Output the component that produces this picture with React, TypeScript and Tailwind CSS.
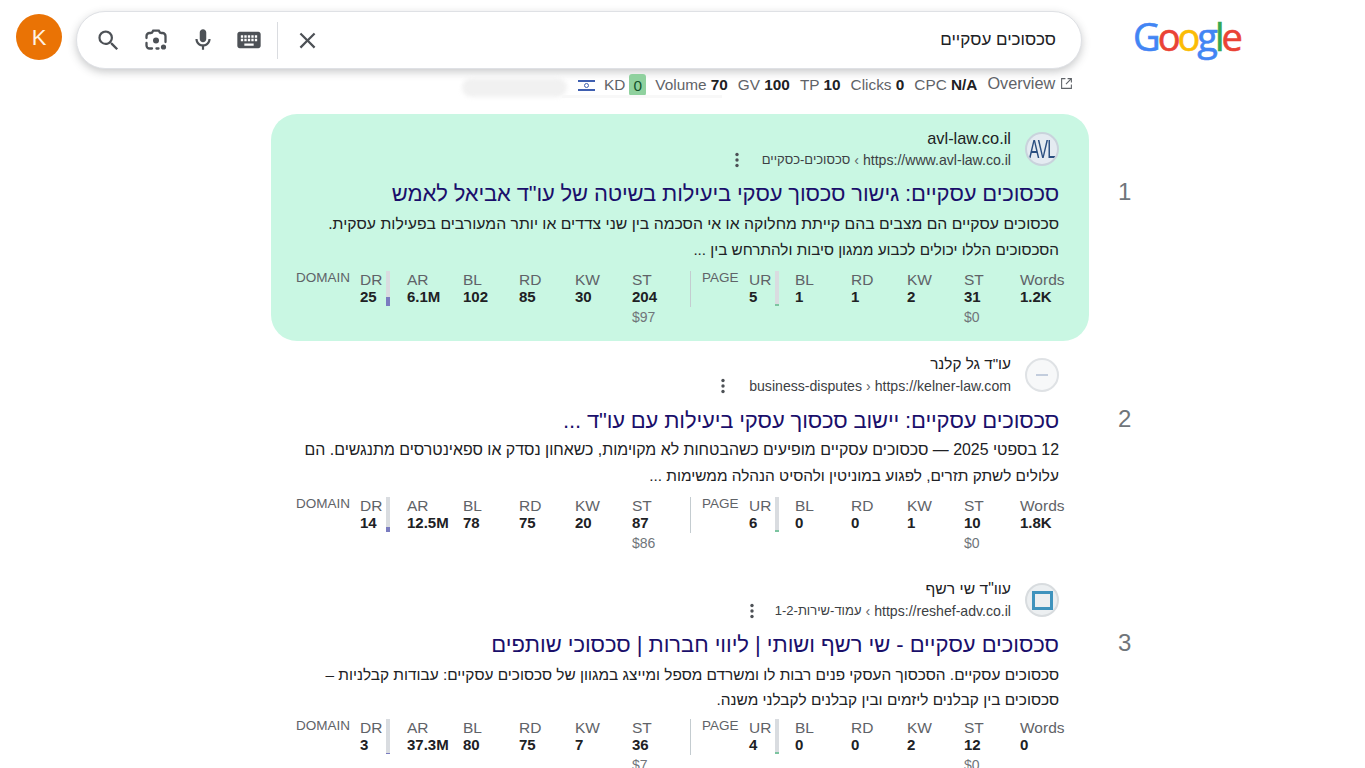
import React from "react";

const F = "[font-family:'Liberation_Sans',Arial,sans-serif]";

type Res = {
  site: string; siteC: string; urlTail: string; tailC: string; dotsC: string; base: string; sep: string;
  title: string; titleC: string; l1: string; l2: string;
  l1c: string; l2c: string; snipC: string; metC: string;
  fav: React.ReactNode; rank: string; h: string; topC: string; green?: boolean; barH: string;
  d: string[]; p: string[]; st$: string; pst$: string;
};

const Avl = (
  <div className="flex h-[34px] w-[34px] items-center justify-center overflow-hidden rounded-full border-2 border-[#c9d3dc] bg-[#e4ebf1]">
    <span className="scale-x-[0.62] text-[25px] leading-none tracking-[-1px] text-[#2a4f80] [font-family:'Liberation_Sans',sans-serif]">AVL</span>
  </div>
);
const Kel = (
  <div className="flex h-[34px] w-[34px] items-center justify-center rounded-full border-2 border-[#dfe2e5] bg-[#f7f8f9]">
    <div className="h-[2px] w-[12px] bg-[#c3cddd]" />
  </div>
);
const Res3 = (
  <div className="flex h-[34px] w-[34px] items-center justify-center rounded-full border-2 border-[#d8dcdf] bg-[#eceff1]">
    <div className="h-[19px] w-[21px] border-[3px] border-[#3f93bd]" />
  </div>
);

const results: Res[] = [
  {
    site: "avl-law.co.il", siteC: "text-[16.4px]", base: "https://www.avl-law.co.il", sep: "‹", urlTail: "סכסוכים-כסקיים", tailC: "text-[13px]", dotsC: "mr-[23px]",
    title: "סכסוכים עסקיים: גישור סכסוך עסקי ביעילות בשיטה של עו\"ד אביאל לאמש", titleC: "mt-[6px] tracking-[-0.14px]",
    l1: "סכסוכים עסקיים הם מצבים בהם קייתת מחלוקה או אי הסכמה בין שני צדדים או יותר המעורבים בפעילות עסקית.",
    l2: "הסכסוכים הללו יכולים לכבוע ממגון סיבות ולהתרחש בין ...",
    l1c: "text-[15.75px] leading-[26px]", l2c: "text-[15.25px] leading-[26px]", snipC: "", metC: "",
    fav: Avl, rank: "1", h: "h-[227px]", topC: "pt-[13px]", green: true, barH: "h-[9px]",
    d: ["25", "6.1M", "102", "85", "30", "204"], p: ["5", "1", "1", "2", "31", "1.2K"], st$: "$97", pst$: "$0",
  },
  {
    site: "עו\"ד גל קלנר", siteC: "text-[15.3px]", base: "https://kelner-law.com", sep: "›", urlTail: "business-disputes", tailC: "", dotsC: "mr-[24px]",
    title: "סכסוכים עסקיים: יישוב סכסוך עסקי ביעילות עם עו\"ד ...", titleC: "mt-[7px] tracking-[-0.14px]",
    l1: "12 בספטי 2025 — סכסוכים עסקיים מופיעים כשהבטחות לא מקוימות, כשאחון נסדק או ספאינטרסים מתנגשים. הם",
    l2: "עלולים לשתק תזרים, לפגוע במוניטין ולהסיט הנהלה ממשימות ...",
    l1c: "text-[15.9px] leading-[26px]", l2c: "text-[15.4px] leading-[26px]", snipC: "-mt-[1px]", metC: "",
    fav: Kel, rank: "2", h: "h-[224px]", topC: "pt-[12px]", barH: "h-[5px]",
    d: ["14", "12.5M", "78", "75", "20", "87"], p: ["6", "0", "0", "1", "10", "1.8K"], st$: "$86", pst$: "$0",
  },
  {
    site: "עוו\"ד שי רשף", siteC: "text-[15.7px]", base: "https://reshef-adv.co.il", sep: "‹", urlTail: "עמוד-שירות-1-2", tailC: "text-[13px]", dotsC: "mr-[21px]",
    title: "סכסוכים עסקיים - שי רשף ושותי | ליווי חברות | סכסוכי שותפים", titleC: "mt-[6px] tracking-[-0.04px]",
    l1: "סכסוכים עסקיים. הסכסוך העסקי פנים רבות לו ומשרדם מספל ומייצג במגוון של סכסוכים עסקיים: עבודות קבלניות –",
    l2: "סכסוכים בין קבלנים ליזמים ובין קבלנים לקבלני משנה.",
    l1c: "text-[15.4px] leading-[25px]", l2c: "text-[15.4px] leading-[25px]", snipC: "", metC: "-mt-[1px]",
    fav: Res3, rank: "3", h: "h-[225px]", topC: "pt-[13px]", barH: "h-[1px]",
    d: ["3", "37.3M", "80", "75", "7", "36"], p: ["4", "0", "0", "2", "12", "0"], st$: "$7", pst$: "$0",
  },
];

const Dots = () => (
  <svg width="4" height="16" viewBox="0 0 4 16" className="shrink-0" fill="#4d5156">
    <circle cx="2" cy="2.5" r="1.7" /><circle cx="2" cy="8" r="1.7" /><circle cx="2" cy="13.5" r="1.7" />
  </svg>
);

const Cell = ({ label, value, sub, w, bar, barH, barColor }: { label: string; value: string; sub?: string; w: string; bar?: boolean; barH?: string; barColor?: string }) => (
  <div className={`relative shrink-0 ${w}`}>
    <div className="h-[18px] text-[15.5px] leading-[17px] text-[#5f6368]">{label}</div>
    <div className="h-[15px] text-[15px] font-bold leading-[15px] text-[#202124]">{value}</div>
    {sub && <div className="mt-[5px] text-[14px] leading-[16px] text-[#70757a]">{sub}</div>}
    {bar && (
      <div className="absolute left-[26px] top-0 flex h-[35px] w-[4px] flex-col justify-end bg-[#d9dce0]">
        <div className={`${barH} ${barColor}`} />
      </div>
    )}
  </div>
);

const Metrics = ({ r }: { r: Res }) => (
  <div className={`flex items-start pl-[25px] pt-[8px] ${r.metC}`} dir="ltr">
    <div className="mt-[-2px] w-[64px] shrink-0 text-[13.5px] leading-[17px] text-[#5f6368]">DOMAIN</div>
    <Cell label="DR" value={r.d[0]} w="w-[47px]" bar barH={r.barH} barColor="bg-[#7a7cc0]" />
    <Cell label="AR" value={r.d[1]} w="w-[56px]" />
    <Cell label="BL" value={r.d[2]} w="w-[56px]" />
    <Cell label="RD" value={r.d[3]} w="w-[56px]" />
    <Cell label="KW" value={r.d[4]} w="w-[57px]" />
    <Cell label="ST" value={r.d[5]} sub={r.st$} w="w-[58px]" />
    <div className="h-[36px] w-[12px] shrink-0 border-l border-[#c4ccd0]" />
    <div className="mt-[-2px] w-[47px] shrink-0 text-[13.5px] leading-[17px] text-[#5f6368]">PAGE</div>
    <Cell label="UR" value={r.p[0]} w="w-[46px]" bar barH="h-[2px]" barColor="bg-[#7cc4a0]" />
    <Cell label="BL" value={r.p[1]} w="w-[56px]" />
    <Cell label="RD" value={r.p[2]} w="w-[56px]" />
    <Cell label="KW" value={r.p[3]} w="w-[57px]" />
    <Cell label="ST" value={r.p[4]} sub={r.pst$} w="w-[56px]" />
    <Cell label="Words" value={r.p[5]} w="w-[50px]" />
  </div>
);

const Result = ({ r }: { r: Res }) => (
  <div className="flex">
    <div className={`${r.h} w-[818px] shrink-0 ${r.topC} ${r.green ? "rounded-[26px] bg-[#c9f7e3]" : ""}`}>
      <div className="flex justify-end pr-[30px]">
        <div className="flex flex-col items-end pr-[14px]">
          <div dir="rtl" className={`h-[22px] leading-[22px] text-[#202124] ${r.siteC}`}>{r.site}</div>
          <div className="flex h-[22px] items-center text-[14.1px] leading-[22px] text-[#3c4043]">
            <span className={r.dotsC}><Dots /></span>
            <span dir="auto" className={r.tailC}>{r.urlTail}</span>
            <span className="mx-[4px] text-[#5f6368]">{r.sep}</span>
            <span>{r.base}</span>
          </div>
        </div>
        <div className="mt-[5px]">{r.fav}</div>
      </div>
      <div dir="rtl" className={`h-[34px] whitespace-nowrap pr-[30px] text-[22px] leading-[34px] text-[#1a0f6b] ${r.titleC}`}>{r.title}</div>
      <div dir="rtl" className={`pr-[30px] text-[#202124] ${r.snipC}`}>
        <div className={`whitespace-nowrap ${r.l1c}`}>{r.l1}</div>
        <div className={`whitespace-nowrap ${r.l2c}`}>{r.l2}</div>
      </div>
      <Metrics r={r} />
    </div>
    <div className="pl-[29px] pt-[63px] text-[24px] leading-[30px] text-[#70757a]">{r.rank}</div>
  </div>
);

const M = ({ d, c = "#4d5156", s = 24 }: { d: string; c?: string; s?: number }) => (
  <svg width={s} height={s} viewBox="0 0 24 24" fill={c}><path d={d} /></svg>
);

const Stat = ({ k, v }: { k: string; v: string }) => (
  <span className="text-[#5f6368]">{k} <b className="font-bold text-[#202124]">{v}</b></span>
);

export default function App() {
  return (
    <div className={`h-[768px] w-[1365px] overflow-hidden bg-white ${F}`}>
      <header className="flex items-start pl-[16px] pt-[11px]">
        <div className="mt-[3px] flex h-[46px] w-[46px] shrink-0 items-center justify-center rounded-full bg-[#ea7305] text-[22px] text-[#fff3e6]">K</div>
        <div className="ml-[14px] flex h-[58px] w-[1006px] shrink-0 items-center rounded-[29px] border border-[#dfe1e5] bg-white pl-[18px] pr-[25px] shadow-[0_3px_8px_rgba(60,64,67,0.28)]">
          <M s={27} d="M15.5 14h-.79l-.28-.27A6.471 6.471 0 0 0 16 9.5 6.5 6.5 0 1 0 9.5 16c1.61 0 3.09-.59 4.23-1.57l.27.28v.79l5 4.99L20.49 19l-4.99-5zm-6 0C7.01 14 5 11.99 5 9.5S7.01 5 9.5 5 14 7.01 14 9.5 11.99 14 9.5 14z" />
          <svg width="24" height="24" viewBox="0 0 24 24" className="ml-[22px]" fill="none" stroke="#4d5156" strokeWidth="2.3" strokeLinecap="round">
            <path d="M7 5H5.5A3 3 0 0 0 2.5 8v2M2.5 15v2.5a3 3 0 0 0 3 3H8M12.5 20.5h2M21.5 14V8a3 3 0 0 0-3-3H17" />
            <path d="M8 4.6 9.2 2.6h5.6L16 4.6" />
            <circle cx="12" cy="12.5" r="3" fill="#4d5156" stroke="none" />
            <circle cx="19.5" cy="19" r="2.6" fill="#4d5156" stroke="none" />
          </svg>
          <span className="ml-[22px]">
            <M s={26} d="M12 14c1.66 0 3-1.34 3-3V5c0-1.66-1.34-3-3-3S9 3.34 9 5v6c0 1.66 1.34 3 3 3z M17 11c0 2.76-2.24 5-5 5s-5-2.24-5-5H5c0 3.53 2.61 6.43 6 6.92V21h2v-3.08c3.39-.49 6-3.39 6-6.92h-2z" />
          </span>
          <span className="ml-[19px]">
            <M s={28} d="M20 5H4c-1.1 0-1.99.9-1.99 2L2 17c0 1.1.9 2 2 2h16c1.1 0 2-.9 2-2V7c0-1.1-.9-2-2-2zm-9 3h2v2h-2V8zm0 3h2v2h-2v-2zM8 8h2v2H8V8zm0 3h2v2H8v-2zm-1 2H5v-2h2v2zm0-3H5V8h2v2zm9 7H8v-2h8v2zm0-4h-2v-2h2v2zm0-3h-2V8h2v2zm3 3h-2v-2h2v2zm0-3h-2V8h2v2z" />
          </span>
          <div className="ml-[14px] h-[37px] w-px bg-[#dadce0]" />
          <span className="ml-[16px]">
            <M s={27} d="M19 6.41L17.59 5 12 10.59 6.41 5 5 6.41 10.59 12 5 17.59 6.41 19 12 13.41 17.59 19 19 17.59 13.41 12z" />
          </span>
          <div dir="rtl" className="flex-1 text-[17px] text-[#202124]">סכסוכים עסקיים</div>
        </div>
        <div className="ml-[51px] flex h-[50px] items-center text-[38px] leading-none tracking-[-3px] [font-family:'Open_Sans',sans-serif] [-webkit-text-stroke:0.6px_currentColor]">
          <span className="text-[#4285f4]">G</span>
          <span className="text-[#ea4335]">o</span>
          <span className="text-[#fbbc05]">o</span>
          <span className="text-[#4285f4]">g</span>
          <span className="text-[#34a853]">l</span>
          <span className="text-[#ea4335]">e</span>
        </div>
      </header>

      <div className="relative ml-[462px] mt-[1px] flex h-[30px] w-[620px] items-center text-[15.35px]">
        <div className="absolute left-0 top-[8px] h-[19px] w-[105px] rounded-full bg-[#f1f1f1] blur-[2px]" />
        <div className="absolute left-[100px] top-[25px] h-[3px] w-[160px] bg-[#f8f8f8]" />
        <svg width="17" height="13" viewBox="0 0 17 13" className="relative ml-[116px] shrink-0">
          <rect width="17" height="13" fill="#fff" />
          <rect y="1" width="17" height="2" fill="#3f5fb0" />
          <rect y="10" width="17" height="2" fill="#3f5fb0" />
          <circle cx="8.5" cy="6.5" r="2" fill="none" stroke="#3f5fb0" />
        </svg>
        <span className="ml-[9px] text-[#5f6368]">KD</span>
        <span className="ml-[4px] flex h-[22px] w-[17px] items-center justify-center rounded-[3px] bg-[#8fd19e] text-[#14532d]">0</span>
        <span className="ml-[9px] flex gap-[10px] whitespace-nowrap">
          <Stat k="Volume" v="70" />
          <Stat k="GV" v="100" />
          <Stat k="TP" v="10" />
          <Stat k="Clicks" v="0" />
          <Stat k="CPC" v="N/A" />
        </span>
        <span className="ml-[10px] -mt-[4px] text-[16.3px] text-[#5f6368]">Overview</span>
        <svg width="13" height="13" viewBox="0 0 24 24" className="ml-[5px] -mt-[4px]" fill="none" stroke="#5f6368" strokeWidth="2">
          <path d="M10 3H3v18h18v-7M14 3h7v7M21 3 11 13" />
        </svg>
      </div>

      <main className="ml-[271px] mt-[14px]">
        {results.map((r) => <Result key={r.rank} r={r} />)}
      </main>
    </div>
  );
}
